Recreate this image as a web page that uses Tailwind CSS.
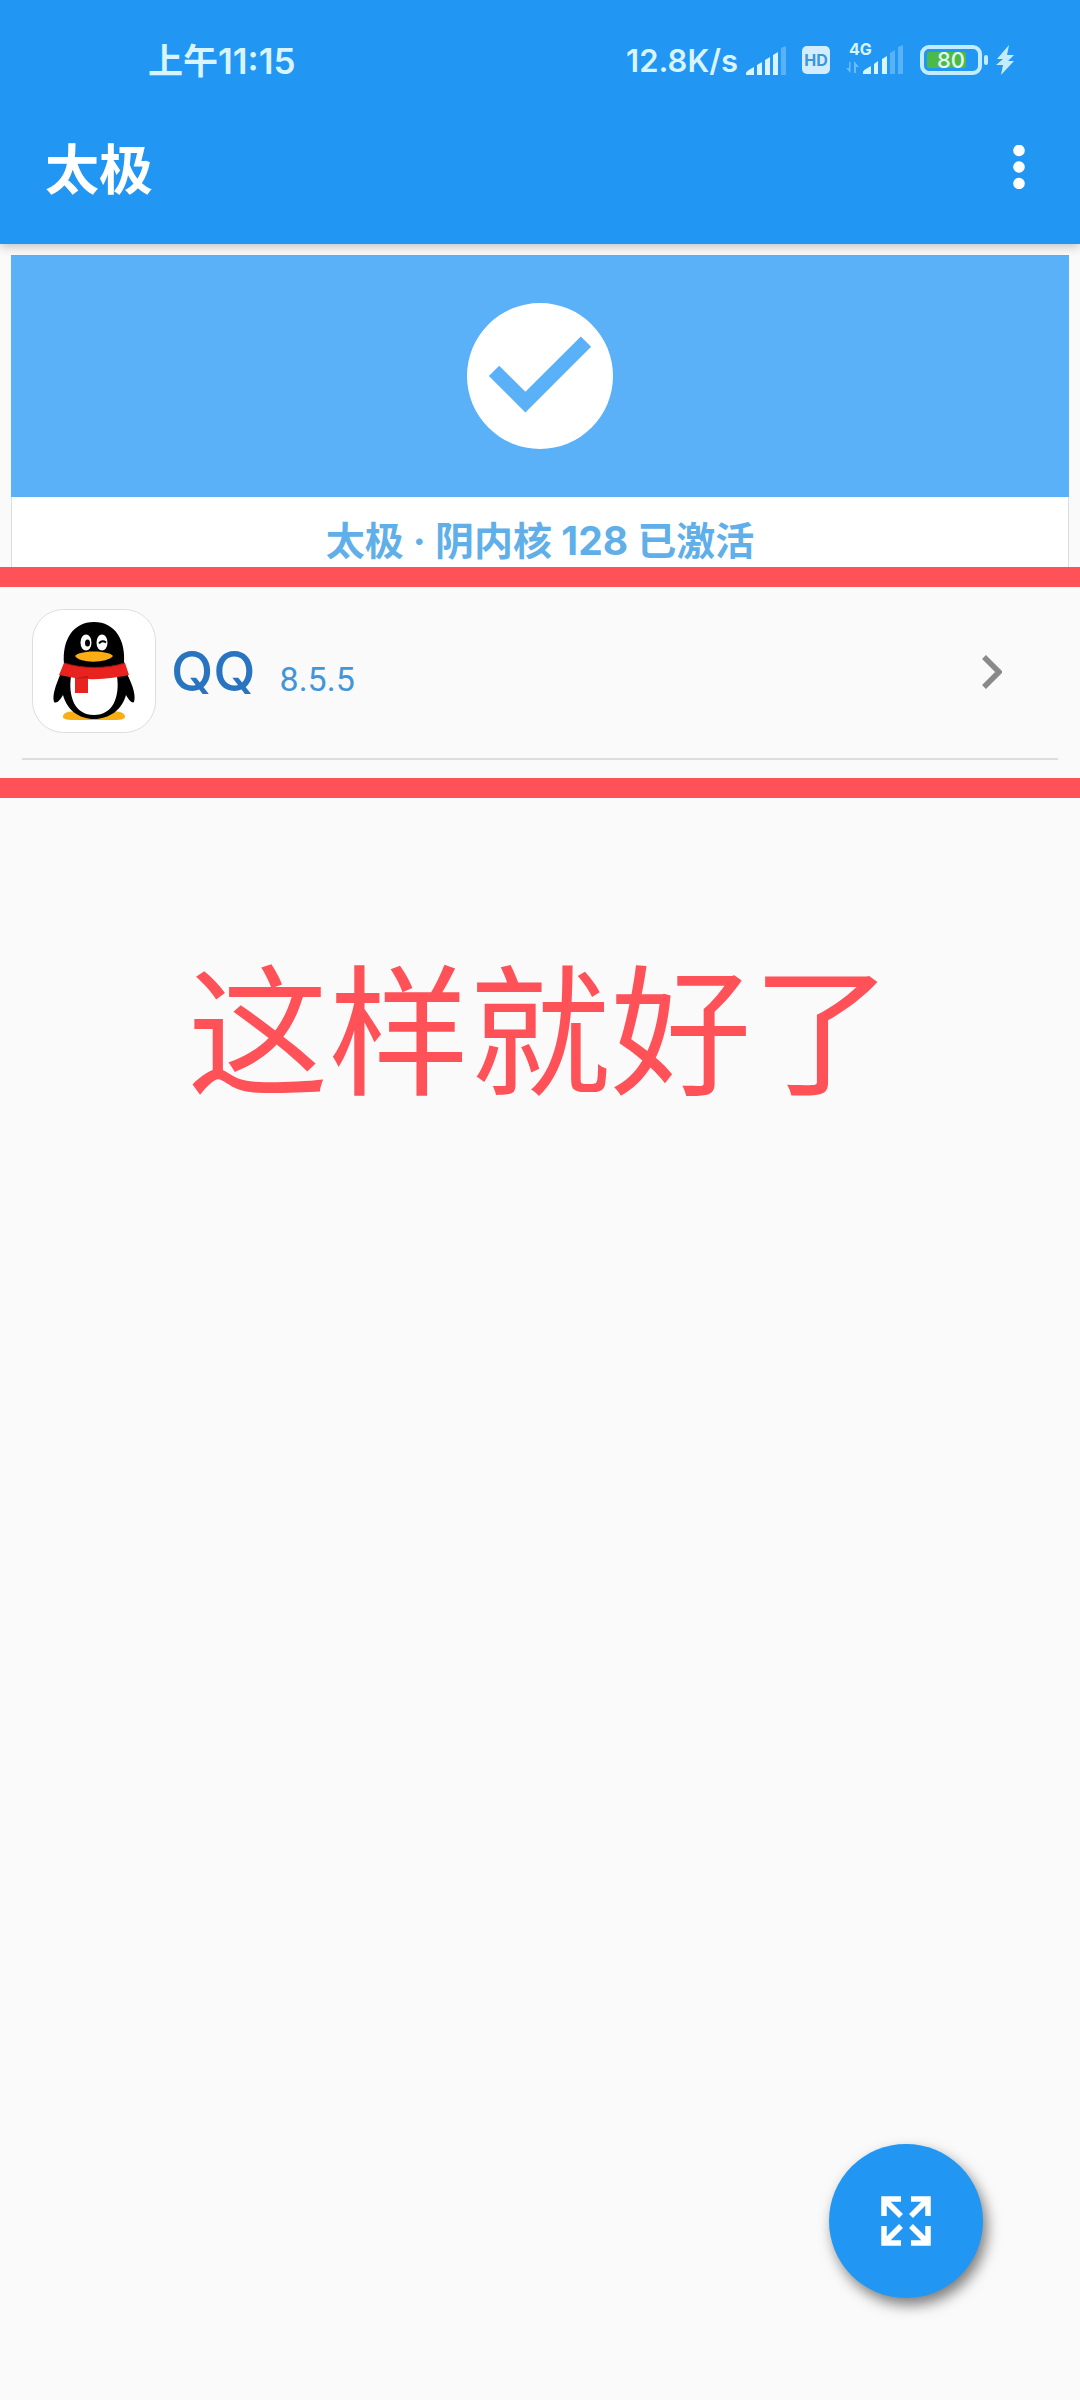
<!DOCTYPE html>
<html lang="zh-CN">
<head>
<meta charset="utf-8">
<meta name="viewport" content="width=device-width, initial-scale=1">
<title>太极</title>
<script src="https://cdn.jsdelivr.net/npm/@tailwindcss/browser@4"></script>
</head>
<body class="min-h-screen bg-[#fafafa] font-['Noto_Sans_CJK_SC',sans-serif]">
<header class="relative bg-[#2196f3] pt-9 shadow-[0_2px_10px_rgba(0,0,0,0.25)]">
  <!-- status bar -->
  <div class="flex h-12 items-center pr-[66px] pl-[148px] font-['Inter','Noto_Sans_CJK_SC',sans-serif] leading-[48px] font-semibold text-[#d8f4ff]">
    <time class="pt-[2px] text-[35px]">上午11:15</time>
    <div class="ml-auto flex items-center">
      <span class="mr-2 pt-[2px] text-[31px]">12.8K/s</span>
      <svg class="mr-4 h-[29px] w-10" viewBox="0 0 40 29" fill="currentColor" aria-label="信号">
        <path d="M0 29v-2q0-2 8-6v8zM11 19l5-3v13h-5zM19 14l5-3v18h-5zM27 9l5-3v23h-5z"/>
        <path d="M35 2l5-2v29h-5z" opacity=".3"/>
      </svg>
      <svg class="mr-4 h-7 w-7" viewBox="0 0 28 28" aria-label="HD">
        <rect width="28" height="28" rx="5" fill="#d3edff"/>
        <text x="14" y="20" text-anchor="middle" font-family="Inter" font-size="16" font-weight="700" fill="#3a97dc">HD</text>
      </svg>
      <svg class="mr-4 h-11 w-[58px]" viewBox="0 -4 58 44" fill="currentColor" aria-label="4G 信号">
        <text x="3" y="13" font-family="Inter" font-size="16" font-weight="700">4G</text>
        <path d="M4.500 20v11L0 26h3v-6zM8 31V19l5 6h-3v6z" opacity=".4"/>
        <path d="M17 32v-2q0-2 8-6v8zM28 22l4-3v13h-4zM36 17l5-3v18h-5z"/>
        <path d="M44 11l5-3v24h-5zM52 5l5-2v29h-5z" opacity=".3"/>
      </svg>
      <svg class="mr-2 h-[30px] w-[68px]" viewBox="0 0 68 30" aria-label="电量 80">
        <rect x="2" y="2" width="58" height="26" rx="7" fill="none" stroke="#c4ecff" stroke-width="4"/>
        <rect x="7" y="7" width="39" height="16" rx="2" fill="#4cba48"/>
        <rect x="64" y="10" width="4" height="10" rx="2" fill="#c4ecff"/>
        <text x="31" y="23" text-anchor="middle" font-family="Inter" font-size="22" font-weight="500" fill="#e2fbf5">80</text>
      </svg>
      <svg class="h-[30px] w-[18px]" viewBox="0 0 18 30" fill="#c4ecff" aria-label="充电中">
        <path d="M13 0L1 14h6L0 20h7L5 30 18 16h-6l6-6h-7z"/>
      </svg>
    </div>
  </div>
  <!-- app bar -->
  <div class="flex h-40 items-center justify-between pt-[6px] pr-[55px] pl-[45px] text-white">
    <h1 class="text-[54px] leading-[80px] font-bold">太极</h1>
    <button type="button" aria-label="更多选项">
      <svg class="h-11 w-3" viewBox="0 0 12 44" fill="currentColor"><circle cx="6" cy="5.500" r="5.800"/><circle cx="6" cy="22" r="5.800"/><circle cx="6" cy="38.500" r="5.800"/></svg>
    </button>
  </div>
</header>

<main>
  <!-- activation card -->
  <section class="mx-[11px] mt-[11px]">
    <div class="flex h-[242px] items-center justify-center bg-[#5ab1f8]">
      <svg class="h-[146px] w-[146px]" viewBox="2 2 20 20" fill="white" aria-hidden="true">
        <path d="M12 2a10 10 0 1 0 0 20 10 10 0 0 0 0-20zm-2 15l-5-5 1.410-1.410L10 14.170l7.590-7.590L19 8z"/>
      </svg>
    </div>
    <p class="h-[70px] overflow-hidden border-x border-[#dddddd] bg-white pt-2 text-center font-['Inter','Noto_Sans_CJK_SC',sans-serif] text-[39px] leading-[72px] font-bold text-[#60afe9]">太极 · 阴内核 128 已激活</p>
  </section>

  <!-- app list, framed in red -->
  <ul class="border-y-[20px] border-[#ff5158] pb-[18px]">
    <li class="mx-[22px] border-b-2 border-[#dddddd]">
      <a href="#qq" class="flex items-center pt-[22px] pr-14 pb-6 pl-[10px]">
        <svg class="h-[125px] w-[125px] shrink-0" viewBox="0 0 125 125" aria-hidden="true">
          <rect x=".5" y=".5" width="123" height="123" rx="31" fill="white" stroke="#dddddd"/>
          <path d="M31 107c2-6 12-5 31-5s29-1 31 5c1 5-10 4-31 4s-32 1-31-4z" fill="#f9ae13"/>
          <path d="M32 55C30 31 41 13 62 13s32 18 30 42l4 12c5 10 8 20 6 26-2 2-6-3-8-7-4 15-17 24-32 24S35 101 31 86c-3 5-6 9-9 7-2-7 2-17 6-27z"/>
          <path d="M39 67c12 2 34 3 46 0 3 21-4 39-23 39S36 88 39 67z" fill="white"/>
          <path d="M32 54c20 6 41 6 61 0l4 12c-10 2-27 5-41 4v14H43V69l-16-3z" fill="#e8221f"/>
          <path d="M32 54c20 6 41 6 61 0" fill="none" stroke="#9c1717" stroke-width="1"/>
          <path d="M43 70c6-2 10-3 13-3v2z" fill="#bd1b1b"/>
          <ellipse cx="54" cy="33.500" rx="5.500" ry="8" fill="white"/>
          <ellipse cx="70" cy="33.500" rx="5.500" ry="8" fill="white"/>
          <ellipse cx="55.500" cy="34" rx="2.500" ry="3.500"/>
          <path d="M67 34.500q3-4 7-1" fill="none" stroke="black" stroke-width="2"/>
          <path d="M43 47c4-6 34-6 38 0-5 7-33 8-38 0z" fill="#f9ae13"/>
        </svg>
        <span class="ml-[14px] flex items-baseline pt-[6px]">
          <span class="font-['Inter',sans-serif] text-[55px] leading-[64px] font-medium text-[#2874c0]">QQ</span>
          <span class="ml-6 font-['Roboto',sans-serif] text-[34px] leading-[64px] text-[#4196d8]">8.5.5</span>
        </span>
        <svg class="ml-auto h-[34px] w-5" viewBox="0 0 20 34" fill="none" stroke="#8a8a8a" stroke-width="5.500" aria-hidden="true"><path d="M2 2l15 15L2 32"/></svg>
      </a>
    </li>
  </ul>

  <p class="mt-[125px] text-center text-[141px] leading-[200px] text-[#ff5158]">这样就好了</p>
</main>

<button type="button" aria-label="全屏" class="fixed right-[97px] bottom-[102px] flex h-[154px] w-[154px] items-center justify-center rounded-full bg-[#2196f3] text-white shadow-[4px_7px_14px_rgba(0,0,0,0.5)]">
  <svg class="h-[50px] w-[50px]" viewBox="0 0 50 50" fill="none" stroke="currentColor" stroke-width="5.500" aria-hidden="true">
    <path d="M20 3H3v17M3 3l17 17M30 3h17v17M47 3L30 20M3 30v17h17M3 47l17-17M47 30v17H30M47 47L30 30"/>
  </svg>
</button>
</body>
</html>
